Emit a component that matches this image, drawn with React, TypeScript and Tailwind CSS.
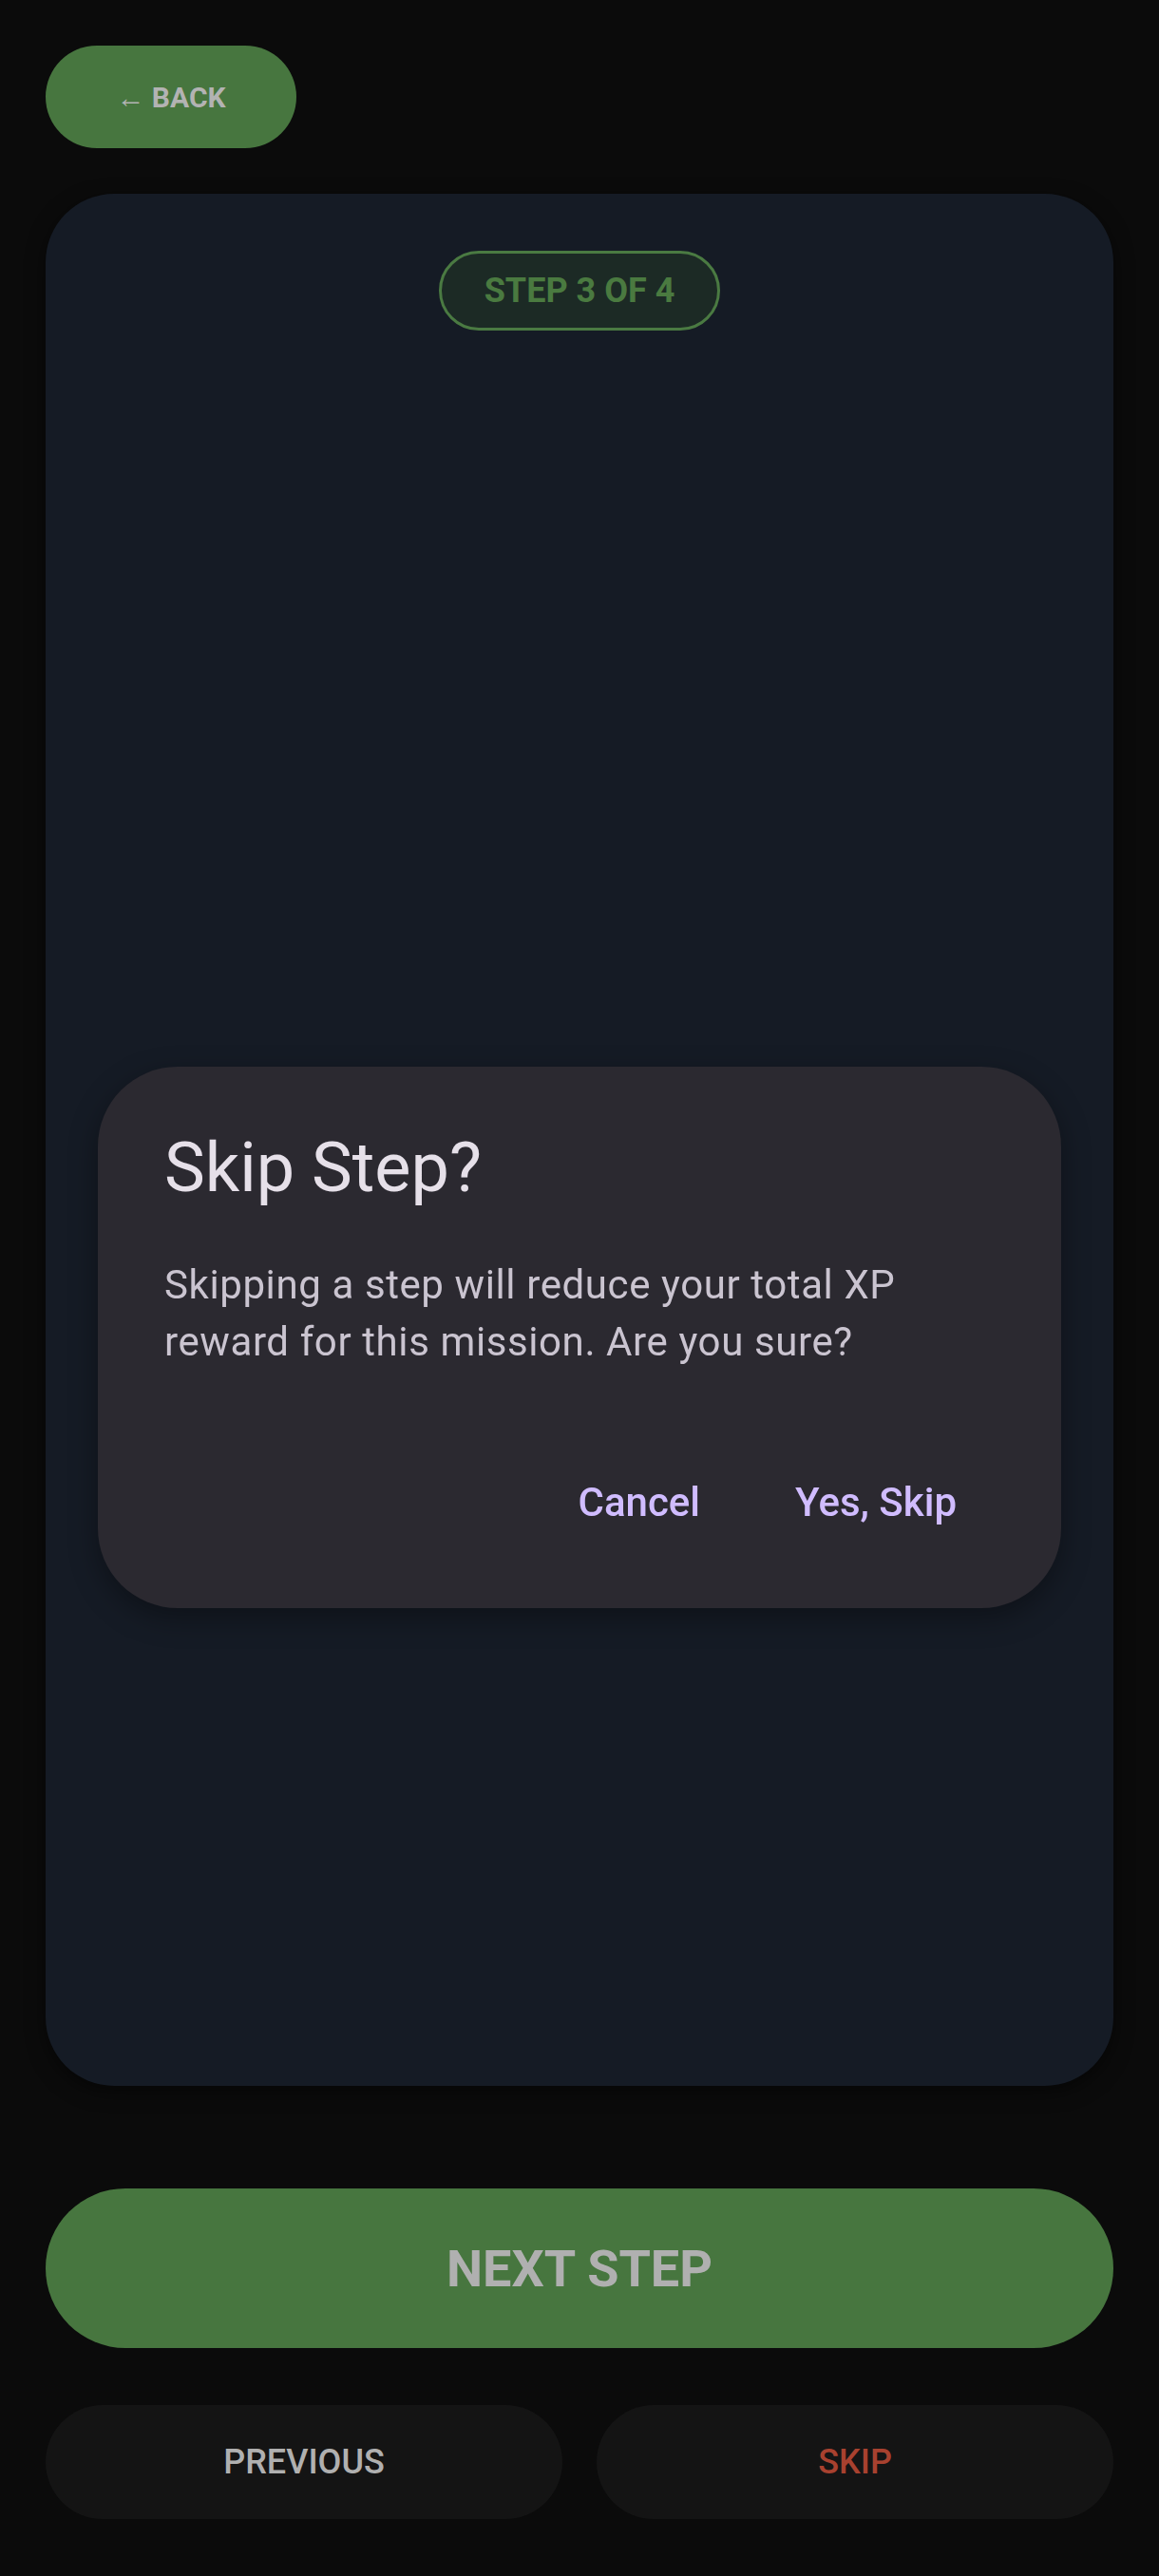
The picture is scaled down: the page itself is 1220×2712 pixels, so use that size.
import React from "react";

const font = "font-['Roboto','Noto_Sans',sans-serif]";

function SkipDialog() {
  return (
    <div className="fixed inset-0 flex items-center justify-center pt-[104px]">
      <div className="w-[1014px] rounded-[84px] bg-[#2b2930] pl-[70px] pr-[72px] pt-[59px] pb-[52px] shadow-[0_10px_30px_rgba(0,0,0,0.35)]">
        <h2 className="text-[72px] leading-[96px] font-normal text-[#e6e0e9]">Skip Step?</h2>
        <p className="mt-[45px] text-[42px] leading-[60px] tracking-[0.6px] text-[#cac4d0]">
          Skipping a step will reduce your total XP reward for this mission. Are you sure?
        </p>
        <div className="mt-[78px] flex justify-end gap-[28px]">
          <button className="h-[120px] rounded-full px-[36px] text-[42px] font-medium text-[#d0bcff]">Cancel</button>
          <button className="h-[120px] rounded-full pl-[36px] pr-[38px] text-[42px] font-medium text-[#d0bcff]">Yes, Skip</button>
        </div>
      </div>
    </div>
  );
}

export default function App() {
  return (
    <div className={`${font} flex min-h-screen flex-col bg-[#0b0b0b] px-[48px] pt-[48px] pb-[60px]`}>
      <button className="flex h-[108px] w-[264px] items-center justify-center rounded-full bg-[#47763f] text-[30px] font-bold text-[#b3b3b3]">
        ← BACK
      </button>

      <div className="mt-[48px] flex flex-1 flex-col items-center rounded-[72px] bg-[#151b25] pt-[60px] shadow-[0_6px_20px_rgba(0,0,0,0.5)]">
        <div className="flex h-[84px] w-[296px] items-center justify-center rounded-full border-[3px] border-[#4a7a42] bg-[#1c2a25] text-[36px] font-bold text-[#4a7a40]">
          STEP 3 OF 4
        </div>
      </div>

      <button className="mt-[108px] flex h-[168px] items-center justify-center rounded-full bg-[#47763f] text-[54px] font-bold text-[#b0b0b0]">
        NEXT STEP
      </button>

      <div className="mt-[60px] grid grid-cols-2 gap-[36px]">
        <button className="flex h-[120px] items-center justify-center rounded-full bg-[#141414] text-[36px] font-medium text-[#b0b0b0]">
          PREVIOUS
        </button>
        <button className="flex h-[120px] items-center justify-center rounded-full bg-[#141414] text-[36px] font-medium text-[#a8412f]">
          SKIP
        </button>
      </div>

      <SkipDialog />
    </div>
  );
}
